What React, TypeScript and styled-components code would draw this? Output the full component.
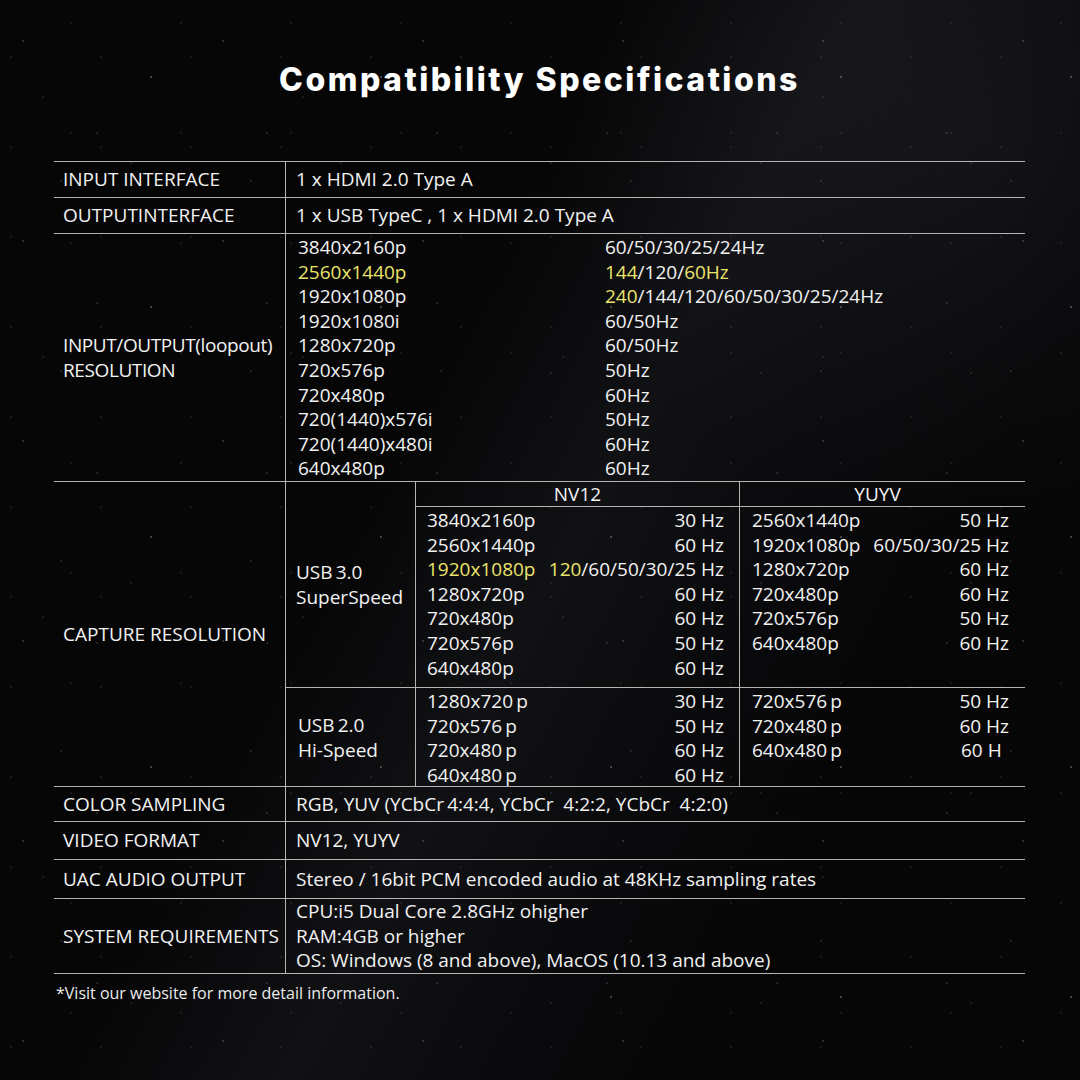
import React from "react";
import styled, { createGlobalStyle } from "styled-components";

const GlobalStyle = createGlobalStyle`
  html, body {
    margin: 0;
    padding: 0;
    background: #060607;
  }
`;

const line = "1.5px solid #b3b3b3";

const Page = styled.div`
  position: relative;
  width: 1080px;
  height: 1080px;
  box-sizing: border-box;
  padding: 0 55px 0 54px;
  overflow: hidden;
  color: #f2f2f2;
  font-family: "Open Sans", "Noto Sans", sans-serif;
  font-size: 19px;
  background-color: #060607;
  background-image:
    radial-gradient(1px 1px at 23px 41px, rgba(255, 255, 255, 0.55), transparent),
    radial-gradient(1px 1px at 97px 133px, rgba(255, 255, 255, 0.4), transparent),
    radial-gradient(1.5px 1.5px at 151px 77px, rgba(255, 255, 255, 0.45), transparent),
    radial-gradient(1px 1px at 61px 181px, rgba(255, 255, 255, 0.35), transparent),
    radial-gradient(1px 1px at 187px 19px, rgba(255, 255, 255, 0.3), transparent),
    radial-gradient(1px 1px at 43px 97px, rgba(200, 210, 255, 0.35), transparent),
    radial-gradient(1px 1px at 131px 163px, rgba(255, 255, 255, 0.3), transparent),
    radial-gradient(1px 1px at 11px 57px, rgba(255, 255, 255, 0.25), transparent),
    radial-gradient(1px 1px at 71px 23px, rgba(255, 255, 255, 0.25), transparent),
    linear-gradient(
      118deg,
      rgba(0, 0, 0, 0) 38%,
      rgba(110, 115, 135, 0.1) 52%,
      rgba(70, 75, 95, 0.08) 62%,
      rgba(0, 0, 0, 0) 75%
    ),
    radial-gradient(circle at 90% 12%, rgba(90, 95, 110, 0.12), transparent 30%);
  background-size: 200px 200px, 170px 170px, 230px 230px, 190px 190px, 150px 150px,
    260px 260px, 210px 210px, 90px 90px, 110px 110px, 100% 100%, 100% 100%;
`;

const Title = styled.h1`
  margin: 60px 0 61px;
  height: 40px;
  line-height: 40px;
  text-align: center;
  font-family: Inter, "Noto Sans", sans-serif;
  font-weight: 800;
  font-size: 32px;
  letter-spacing: 2.5px;
  color: #ffffff;
`;

const Table = styled.div`
  border-top: ${line};
`;

const Row = styled.div<{ $h: number }>`
  display: grid;
  grid-template-columns: 232px 1fr;
  height: ${(p) => p.$h}px;
  border-bottom: ${line};
`;

const Label = styled.div<{ $tight?: boolean }>`
  display: flex;
  align-items: center;
  padding-left: 9px;
  border-right: ${line};
  line-height: 24.6px;
  white-space: nowrap;
  letter-spacing: ${(p) => (p.$tight ? "-0.4px" : "normal")};
`;

const Value = styled.div`
  display: flex;
  flex-direction: column;
  justify-content: center;
  padding-left: 10px;
  line-height: 24.6px;
  white-space: pre;
`;

const ResList = styled.div`
  display: grid;
  grid-template-columns: 307px 1fr;
  padding: 1px 0 0 12px;
  line-height: 24.6px;
`;

const Hi = styled.span`
  color: #ebe46a;
`;

const Capture = styled.div`
  display: grid;
  grid-template-columns: 130px 324px 1fr;
  grid-template-rows: 25px 180px 1fr;
`;

const UsbLabel = styled.div<{ $row: string; $pad: number; $top?: boolean }>`
  grid-row: ${(p) => p.$row};
  grid-column: 1;
  display: flex;
  flex-direction: column;
  justify-content: center;
  padding-left: ${(p) => p.$pad}px;
  border-right: ${line};
  border-top: ${(p) => (p.$top ? line : "none")};
  line-height: 24.6px;
`;

const FormatHead = styled.div<{ $col: number; $last?: boolean }>`
  grid-row: 1;
  grid-column: ${(p) => p.$col};
  display: flex;
  align-items: center;
  justify-content: center;
  border-bottom: ${line};
  border-right: ${(p) => (p.$last ? "none" : line)};
  line-height: 24px;
  padding-right: ${(p) => (p.$last ? 10 : 0)}px;
`;

const ModeList = styled.div<{
  $row: number;
  $col: number;
  $top?: boolean;
  $last?: boolean;
}>`
  grid-row: ${(p) => p.$row};
  grid-column: ${(p) => p.$col};
  display: flex;
  flex-direction: column;
  padding: 1px ${(p) => (p.$last ? 16 : 15)}px 0 ${(p) => (p.$last ? 12 : 11)}px;
  border-right: ${(p) => (p.$last ? "none" : line)};
  border-top: ${(p) => (p.$top ? line : "none")};
  line-height: 24.6px;
  white-space: pre;
`;

const Mode = styled.div`
  display: flex;
  justify-content: space-between;
`;

const Rate = styled.span`
  min-width: 48px;
  text-align: left;
`;

const Footnote = styled.p`
  margin: 8px 0 0 2px;
  font-size: 16px;
  line-height: 22px;
  color: #ececec;
`;

type ModeRow = [React.ReactNode, React.ReactNode];

const resolutions: ModeRow[] = [
  ["3840x2160p", "60/50/30/25/24Hz"],
  [<Hi>2560x1440p</Hi>, <><Hi>144</Hi>/120/<Hi>60Hz</Hi></>],
  ["1920x1080p", <><Hi>240</Hi>/144/120/60/50/30/25/24Hz</>],
  ["1920x1080i", "60/50Hz"],
  ["1280x720p", "60/50Hz"],
  ["720x576p", "50Hz"],
  ["720x480p", "60Hz"],
  ["720(1440)x576i", "50Hz"],
  ["720(1440)x480i", "60Hz"],
  ["640x480p", "60Hz"],
];

const nv12Usb3: ModeRow[] = [
  ["3840x2160p", "30 Hz"],
  ["2560x1440p", "60 Hz"],
  [<Hi>1920x1080p</Hi>, <><Hi>120</Hi>/60/50/30/25 Hz</>],
  ["1280x720p", "60 Hz"],
  ["720x480p", "60 Hz"],
  ["720x576p", "50 Hz"],
  ["640x480p", "60 Hz"],
];

const yuyvUsb3: ModeRow[] = [
  ["2560x1440p", "50 Hz"],
  ["1920x1080p", "60/50/30/25 Hz"],
  ["1280x720p", "60 Hz"],
  ["720x480p", "60 Hz"],
  ["720x576p", "50 Hz"],
  ["640x480p", "60 Hz"],
];

const nv12Usb2: ModeRow[] = [
  ["1280x720\u2009p", "30 Hz"],
  ["720x576\u2009p", "50 Hz"],
  ["720x480\u2009p", "60 Hz"],
  ["640x480\u2009p", "60 Hz"],
];

const yuyvUsb2: ModeRow[] = [
  ["720x576\u2009p", "50 Hz"],
  ["720x480\u2009p", "60 Hz"],
  ["640x480\u2009p", "60 H"],
];

const Modes = ({ rows }: { rows: ModeRow[] }) => (
  <>
    {rows.map(([res, rate], i) => (
      <Mode key={i}>
        <span>{res}</span>
        <Rate>{rate}</Rate>
      </Mode>
    ))}
  </>
);

const App = () => {
  return (
    <Page>
      <GlobalStyle />
      <Title>Compatibility Specifications</Title>
      <Table>
        <Row $h={35}>
          <Label>INPUT INTERFACE</Label>
          <Value>1 x HDMI 2.0 Type A</Value>
        </Row>
        <Row $h={35}>
          <Label>OUTPUTINTERFACE</Label>
          <Value>1 x USB TypeC , 1 x HDMI 2.0 Type A</Value>
        </Row>
        <Row $h={247}>
          <Label $tight>
            INPUT/OUTPUT(loopout)
            <br />
            RESOLUTION
          </Label>
          <ResList>
            {resolutions.map(([res, rate], i) => (
              <React.Fragment key={i}>
                <span>{res}</span>
                <span>{rate}</span>
              </React.Fragment>
            ))}
          </ResList>
        </Row>
        <Row $h={304}>
          <Label>CAPTURE RESOLUTION</Label>
          <Capture>
            <UsbLabel $row="1 / span 2" $pad={10}>
              <span>USB{"\u2009"}3.0</span>
              <span>SuperSpeed</span>
            </UsbLabel>
            <FormatHead $col={2}>NV12</FormatHead>
            <FormatHead $col={3} $last>
              YUYV
            </FormatHead>
            <ModeList $row={2} $col={2}>
              <Modes rows={nv12Usb3} />
            </ModeList>
            <ModeList $row={2} $col={3} $last>
              <Modes rows={yuyvUsb3} />
            </ModeList>
            <UsbLabel $row="3" $pad={12} $top>
              <span>USB{"\u2009"}2.0</span>
              <span>Hi-Speed</span>
            </UsbLabel>
            <ModeList $row={3} $col={2} $top>
              <Modes rows={nv12Usb2} />
            </ModeList>
            <ModeList $row={3} $col={3} $top $last>
              <Modes rows={yuyvUsb2} />
            </ModeList>
          </Capture>
        </Row>
        <Row $h={34}>
          <Label>COLOR SAMPLING</Label>
          <Value>RGB, YUV (YCbCr{"\u2009"}4:4:4, YCbCr  4:2:2, YCbCr  4:2:0)</Value>
        </Row>
        <Row $h={37}>
          <Label>VIDEO FORMAT</Label>
          <Value>NV12, YUYV</Value>
        </Row>
        <Row $h={38}>
          <Label>UAC AUDIO OUTPUT</Label>
          <Value>Stereo / 16bit PCM encoded audio at 48KHz sampling rates</Value>
        </Row>
        <Row $h={74}>
          <Label>SYSTEM REQUIREMENTS</Label>
          <Value>
            <span>CPU:i5 Dual Core 2.8GHz ohigher</span>
            <span>RAM:4GB or higher</span>
            <span>OS: Windows (8 and above), MacOS (10.13 and above)</span>
          </Value>
        </Row>
      </Table>
      <Footnote>*Visit our website for more detail information.</Footnote>
    </Page>
  );
};

export default App;
